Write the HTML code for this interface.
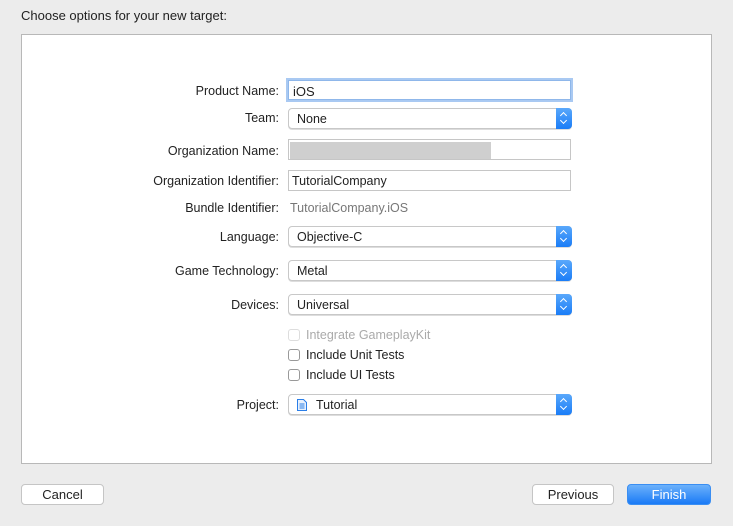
<!DOCTYPE html><html><head><style>
body{margin:0;width:733px;height:526px;background:#ececec;font-family:"Liberation Sans",sans-serif;font-size:12.5px;color:#222;position:relative;overflow:hidden}
.a{position:absolute}
.t{left:21px;top:8px;font-size:13px}
.panel{left:21px;top:34px;width:689px;height:428px;background:#fff;border:1px solid #b8b8b8}
.l{right:454px;text-align:right;white-space:nowrap}
.tf{left:288px;width:283px;height:20px;border:1px solid #c6c6c6;background:#fff;box-sizing:border-box}
.pop{left:288px;width:284px;height:21px;border:1px solid #c8c8c8;border-radius:4px;background:#fff;box-sizing:border-box;box-shadow:0 1px 0 #ddd}
.pop span{position:absolute;left:8px;top:3px}
.pop i{position:absolute;right:-1px;top:-1px;width:16px;height:21px;background:linear-gradient(#5aa8fb,#1a7df7);border-radius:0 4px 4px 0}
.pop i:before{content:"";position:absolute;left:5px;top:5px;width:4px;height:4px;border-left:1.3px solid #fff;border-top:1.3px solid #fff;transform:rotate(45deg)}
.pop i:after{content:"";position:absolute;left:5px;top:10px;width:4px;height:4px;border-right:1.3px solid #fff;border-bottom:1.3px solid #fff;transform:rotate(45deg)}
.cb{left:288px;width:12px;height:12px;border:1px solid #999;border-radius:3px;background:#fff;box-sizing:border-box}
.btn{height:21px;border:1px solid #c5c5c5;border-radius:4px;background:#fff;box-sizing:border-box;text-align:center;line-height:19px;font-size:13px}
</style></head><body>
<div class="a t">Choose options for your new target:</div>
<div class="a panel"></div>
<div class="a l" style="top:84px">Product Name:</div>
<div class="a tf" style="top:80px;border:1px solid #8fb7ea;box-shadow:0 0 0 2px #a9c9f2"><span class="a" style="left:4px;top:3px;font-size:13px">iOS</span></div>
<div class="a l" style="top:111px">Team:</div>
<div class="a pop" style="top:108px"><span>None</span><i></i></div>
<div class="a l" style="top:144px">Organization Name:</div>
<div class="a tf" style="top:139px;height:21px"><div class="a" style="left:1px;top:2px;width:201px;height:17px;background:#cfcfcf"></div></div>
<div class="a l" style="top:174px">Organization Identifier:</div>
<div class="a tf" style="top:170px;height:21px"><span class="a" style="left:3px;top:3px">TutorialCompany</span></div>
<div class="a l" style="top:201px">Bundle Identifier:</div>
<div class="a" style="left:290px;top:201px;color:#777">TutorialCompany.iOS</div>
<div class="a l" style="top:230px">Language:</div>
<div class="a pop" style="top:226px"><span>Objective-C</span><i></i></div>
<div class="a l" style="top:264px">Game Technology:</div>
<div class="a pop" style="top:260px"><span>Metal</span><i></i></div>
<div class="a l" style="top:298px">Devices:</div>
<div class="a pop" style="top:294px"><span>Universal</span><i></i></div>
<div class="a cb" style="top:329px;border-color:#ddd"></div><div class="a" style="left:306px;top:328px;color:#aaa">Integrate GameplayKit</div>
<div class="a cb" style="top:349px"></div><div class="a" style="left:306px;top:348px">Include Unit Tests</div>
<div class="a cb" style="top:369px"></div><div class="a" style="left:306px;top:368px">Include UI Tests</div>
<div class="a l" style="top:398px">Project:</div>
<div class="a pop" style="top:394px"><svg class="a" style="left:8px;top:4px" width="10" height="12"><path d="M.5.5h6l3 3v8h-9z" fill="#e8f1fd" stroke="#2a7ee8"/><path d="M2.5 5h5M2.5 7h5M2.5 9h5" stroke="#2a7ee8"/></svg><span style="left:27px">Tutorial</span><i></i></div>
<div class="a btn" style="left:21px;top:484px;width:83px">Cancel</div>
<div class="a btn" style="left:532px;top:484px;width:82px">Previous</div>
<div class="a btn" style="left:627px;top:484px;width:84px;background:linear-gradient(#6cb1fb,#1a7af6);border-color:#3a8ef2;color:#fff">Finish</div>
</body></html>
